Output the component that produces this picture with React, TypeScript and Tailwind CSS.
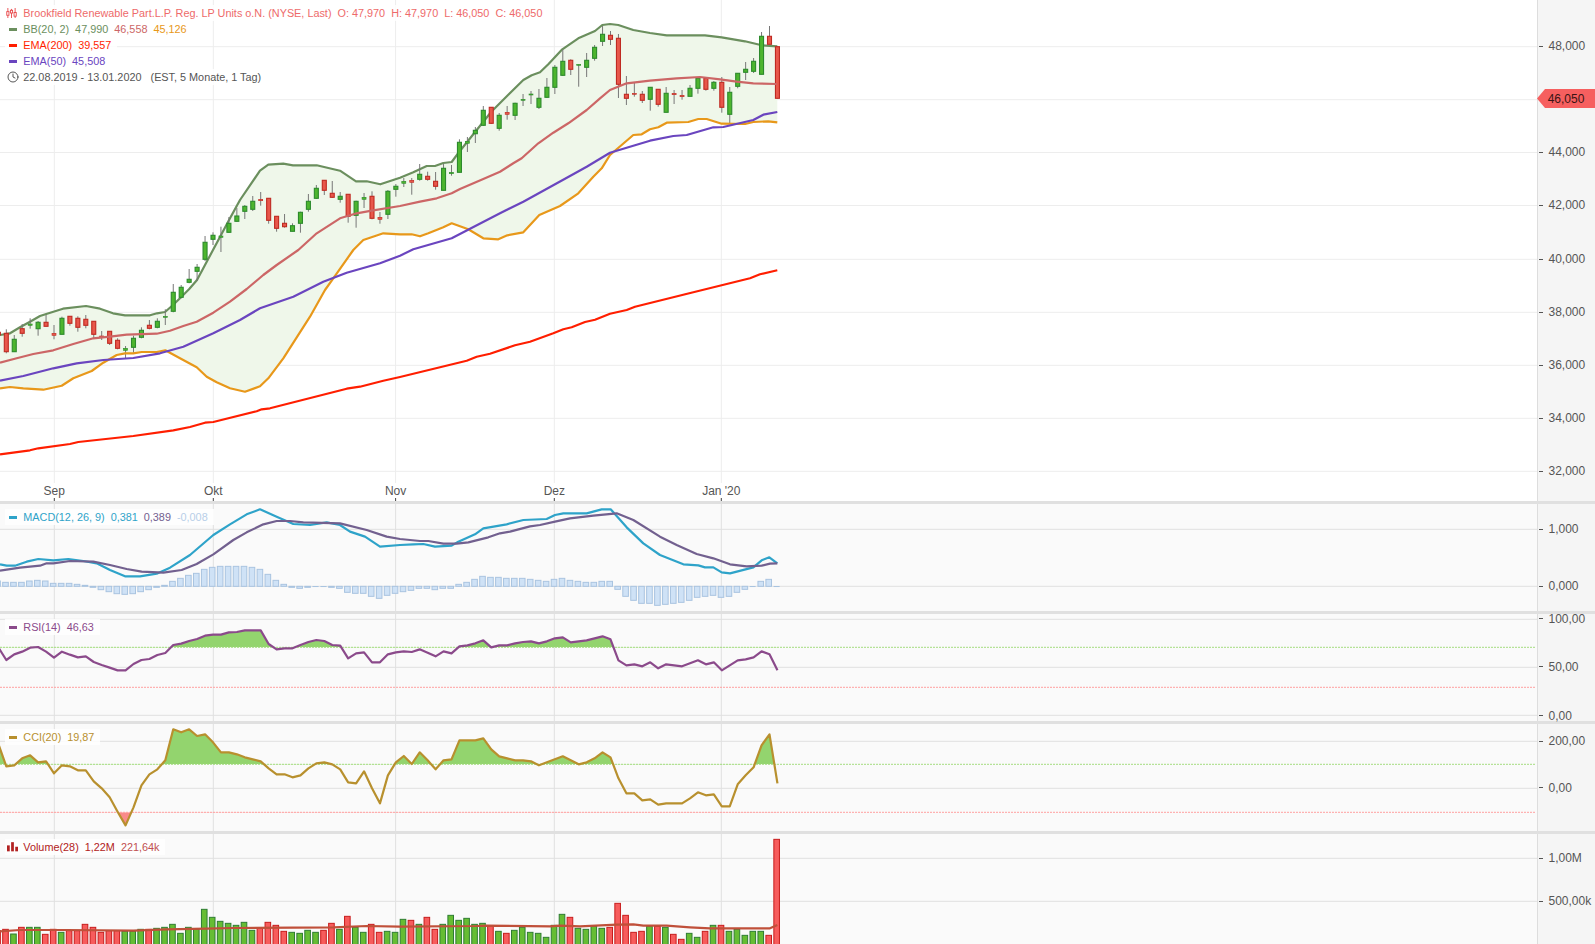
import React from 'react';
import { Clock } from 'lucide-react';

type Pt = [number, number];
type Candle = ['g' | 'r', number, number, number, number];

const PLOT_W = 1537;
const xAt = (k: number) => -1.65 + 7.95 * k;
const toPath = (pts: Pt[]) => pts.map(([x, y]) => `${x},${y}`).join(' ');
// crops were read at 3x, so series below are kept in crop units for the lower panels
const fromCrop = (base: number, v: number) => base + v / 3;

// top, bottom, high, low of each candle body, in page pixels
const candles: Candle[] = [
  ['r', 332.3, 335, 328, 340], ['r', 333.3, 351.7, 329.3, 353.3], ['g', 339.3, 351.7, 335, 351.7], ['r', 328.7, 333.3, 324, 336.7],
  ['g', 324, 325.3, 318.3, 328.7], ['g', 322.3, 328.7, 321, 335.7], ['r', 322.3, 326.3, 315, 326.3], ['r', 333.3, 335.3, 325, 339.3],
  ['g', 318.3, 334.3, 316.7, 334.3], ['r', 316.3, 323.3, 316.3, 325.7], ['r', 318.3, 327.3, 316.3, 331.7], ['r', 319.3, 325.3, 315, 328.3],
  ['r', 321.3, 334.3, 321.3, 338.3], ['r', 336, 337.3, 331, 340], ['r', 331.3, 343.3, 331.3, 345], ['r', 340.3, 348.3, 338.3, 349.3],
  ['g', 348.3, 350.3, 346, 358], ['g', 338.3, 347.3, 335.7, 352.7], ['g', 330.3, 337.3, 327.3, 338.3], ['r', 325.3, 328.3, 320, 329.3],
  ['g', 321.3, 327.3, 318.3, 328.3], ['g', 316.3, 317.3, 309.3, 325], ['g', 292.3, 311.3, 284, 312.3], ['g', 287.3, 297.3, 285, 298.3],
  ['g', 279.3, 282.3, 269, 283.3], ['g', 267.3, 271.3, 264, 281], ['g', 242.3, 259.3, 236, 261], ['g', 235.3, 239.3, 232.3, 245],
  ['g', 236, 237.3, 226.7, 252], ['g', 223.3, 232.3, 217, 233], ['g', 216, 221.3, 208, 222], ['g', 206.3, 211.3, 205, 219],
  ['g', 201.3, 209.3, 196, 211], ['r', 199.3, 200.7, 192, 205.7], ['r', 198.3, 220.3, 198.3, 223.7], ['r', 216.3, 228.3, 216.3, 231.7],
  ['r', 223.3, 226.7, 214, 227.7], ['g', 225.7, 231.3, 223.3, 231.3], ['g', 212.3, 223.3, 211.7, 232.7], ['g', 201.3, 209.3, 194, 211.7],
  ['g', 188.3, 198.3, 185, 199], ['r', 180.3, 190.3, 180.3, 195], ['r', 193.3, 197.3, 181, 198], ['g', 196.3, 199.3, 192, 202.7],
  ['r', 194.3, 216.3, 194.3, 222.7], ['g', 201.3, 215.3, 200.7, 227.7], ['g', 197.3, 199.3, 193, 208], ['r', 196.3, 218.3, 191.3, 219.3],
  ['r', 217.3, 219.3, 212, 223.7], ['g', 191.3, 214.3, 190, 219], ['g', 186.3, 189.3, 184, 196.7], ['g', 181.3, 183.3, 178, 187],
  ['r', 180.3, 182.3, 178, 194.7], ['g', 174.3, 179.3, 164, 180.7], ['r', 176.3, 179.3, 171.7, 180.7], ['r', 181.3, 186.3, 172, 189.7],
  ['g', 168.3, 190.3, 164, 190.3], ['g', 172.3, 173.7, 165, 175.7], ['g', 142.3, 172.3, 139.3, 172.3], ['g', 141.3, 143.3, 137, 152],
  ['g', 130.3, 133.7, 127, 143], ['g', 110.3, 125.3, 106, 126], ['r', 107.3, 123.3, 107.3, 124], ['g', 115.3, 128.3, 113, 130.7],
  ['r', 112.3, 114.3, 106, 119.7], ['g', 103.3, 115.3, 102.7, 120], ['g', 99.3, 100.3, 94, 106], ['g', 94, 95, 91, 104],
  ['g', 98.3, 107.3, 89, 109], ['g', 87.3, 97.3, 78, 98], ['g', 67.3, 87.3, 65, 94], ['g', 61.3, 75.3, 49.7, 76],
  ['r', 60.3, 69.3, 59.3, 75], ['g', 64.3, 65.3, 64.3, 86.7], ['g', 60.3, 67.3, 53, 77], ['g', 47.3, 58.3, 45, 60.7],
  ['g', 34.3, 41.3, 26, 46], ['r', 35.3, 39.3, 31, 45], ['r', 38.3, 84.3, 34, 98], ['r', 94.3, 98.3, 76, 105],
  ['r', 93.3, 94.3, 82, 96.7], ['r', 94.3, 100.3, 91, 103], ['g', 87.3, 99.3, 87, 110.7], ['r', 89.3, 104.3, 89.3, 106.7],
  ['g', 93.3, 112.3, 87, 112.3], ['r', 93.3, 94.7, 90, 104], ['r', 95.3, 96.7, 90, 99.7], ['g', 88.3, 96.3, 85, 96.3],
  ['g', 78.3, 88.3, 77, 93.7], ['r', 78.3, 89.3, 78.3, 90.7], ['g', 82.3, 88.3, 81, 90.7], ['r', 82.3, 107.3, 77, 112.7],
  ['g', 92.3, 114.3, 87, 123.7], ['g', 73.3, 86.3, 73.3, 88.3], ['g', 69.3, 72.3, 62, 80], ['g', 61.3, 71.3, 58, 73],
  ['g', 36.3, 74.3, 32, 74.3], ['r', 36.3, 44.3, 26, 44.3], ['r', 46.7, 98.3, 46.7, 98.3],
];

const bbUpper: Pt[] = [
  [0, 335], [10, 333.3], [20, 327.3], [30, 321.7], [40, 316], [47, 313.7], [63, 308.7], [86, 306], [100, 308.7], [113, 313.3], [125, 315.3], [150, 315.3],
  [157, 313.3], [165, 312], [173, 305], [181, 297.3], [189, 289.3], [197, 280], [205, 265], [213, 250], [230, 218.3], [240, 200], [260, 170.7], [268.3, 164.7],
  [283.3, 163.7], [293, 165.3], [316.7, 165.3], [340, 170.7], [356, 181.3], [366.7, 181.3], [380.3, 184.3], [400, 177.7], [413.3, 172.3], [426.7, 166], [435, 166],
  [443.3, 163], [451.7, 162], [459.3, 151.7], [475.3, 131.7], [491.3, 111.7], [507.3, 95.7], [523.3, 80], [531.7, 75.3], [540, 72.3], [548.3, 64.3], [562.3, 49.3],
  [578.3, 38.3], [595, 31], [602.3, 25], [610, 24], [618.3, 25], [633.3, 30], [650, 33], [666.7, 35.3], [705, 35.3], [721.7, 37.3], [745, 41.3], [761.7, 45.3], [777.3, 46.3],
];
const bbMid: Pt[] = [
  [0, 362.7], [16.7, 358.3], [33.3, 354], [53.3, 350.3], [73.3, 344], [93.3, 338.3], [110, 336.7], [126.7, 334.7], [156.7, 333.7], [170, 330.7], [183.3, 326], [196.7, 321.7],
  [213.3, 312.7], [230, 301.7], [246.7, 289], [263.3, 275], [276.7, 265], [298.3, 250], [316.7, 233.3], [340, 218.3], [356.7, 213.3], [371.7, 210.7], [400, 206], [420, 201.7],
  [436.7, 198.3], [451.7, 193.3], [460, 189], [483.3, 179], [500, 171.7], [513.3, 163.3], [521.7, 158.3], [538.3, 143.3], [553.3, 132.7], [568.3, 123.3], [586.7, 110], [600, 98.3],
  [610, 90], [626.7, 83.3], [650, 80.7], [676.7, 78.3], [700, 77], [720, 79.3], [736.7, 81.7], [753.3, 83.3], [776.7, 84],
];
const bbLower: Pt[] = [
  [0, 388.3], [10, 387], [23.3, 388.3], [43.3, 389.7], [61.7, 385.7], [73.3, 378.3], [91.7, 371], [103.3, 362.7], [116.7, 355], [125, 353.3], [133.3, 353.3], [141.7, 352],
  [156.7, 352], [165.3, 350.3], [180, 358.3], [196.7, 367.3], [206.7, 376.7], [216.7, 382.3], [230, 388.3], [245, 391.7], [260, 386.3], [268.3, 378.3], [283.3, 358.3], [310, 316.7],
  [325, 290], [333.3, 278.3], [353.3, 250], [363.3, 240], [383.3, 233.3], [400, 234.3], [411.7, 234.3], [420, 236.3], [428.3, 233.3], [443.3, 227.3], [451.7, 223.3], [468.3, 229.3],
  [483.3, 238.3], [498.3, 239.3], [507.3, 235.3], [523.3, 232.3], [539.3, 215], [560, 206], [578.3, 193.3], [593.3, 176.7], [601.7, 168.3], [610, 155], [633.3, 135], [641.7, 134.3],
  [650, 129.3], [658.3, 127.3], [666.7, 122.7], [688.3, 122], [698.3, 119], [706.7, 119], [721.7, 123.7], [745, 124], [753.3, 122], [768.3, 121.3], [777.3, 122.3],
];
const ema50: Pt[] = [
  [0, 380.7], [23.3, 376], [53.3, 368.3], [76.7, 363.3], [103.3, 360], [133.3, 358], [160, 353.3], [183.3, 346.7], [213.3, 333.3], [240, 320], [260, 308.3], [293.3, 296.7],
  [323.3, 281.7], [346.7, 272.7], [380, 263.3], [400, 255.7], [413.3, 249.3], [451.7, 238.3], [500, 213.3], [523.3, 201.7], [570, 176], [586.7, 166.7], [610, 152.7], [633.3, 145.7],
  [650, 140.7], [673.3, 136], [686.7, 135], [713.3, 127.3], [723.3, 127], [753.3, 120], [763.3, 114.7], [777.3, 112],
];
const ema200: Pt[] = [
  [0, 454.3], [30, 450.3], [38.3, 448.3], [70, 444], [78.3, 442], [133.3, 436], [173.3, 430.3], [190, 427], [205, 422.7], [213.3, 422], [256.7, 411.3], [261.7, 409.3], [270, 408.3],
  [346.7, 388.7], [360, 386.7], [383.3, 380.7], [400, 377], [466.7, 360.7], [476.7, 356.7], [490, 353.7], [515, 345.3], [530, 341.7], [553.3, 333.3], [563.3, 329.3], [571.7, 327.3],
  [585, 322], [595, 319.7], [610, 313.7], [626.7, 310], [635, 306.7], [693.3, 292.3], [750, 278.3], [760, 274.3], [777.3, 270.3],
];

const macdLine: Pt[] = [
  ...([[0, 208], [20, 212], [45, 212], [80, 200], [115, 192], [160, 196], [205, 192], [250, 198], [290, 205], [330, 225], [375, 244], [420, 244], [470, 236], [510, 218], [570, 180], [640, 120], [690, 88], [740, 58], [780, 43], [830, 65], [880, 87], [930, 90], [980, 82], [1020, 90], [1050, 110], [1095, 125], [1140, 155], [1200, 150]] as Pt[]).map(([a, b]): Pt => [a / 3, fromCrop(495, b)]),
  ...([[40, 148], [70, 147], [105, 155], [155, 152], [175, 140], [225, 118], [250, 100], [320, 88], [370, 75], [440, 72], [465, 60], [490, 55], [560, 55], [605, 43], [632, 43], [680, 97], [730, 145], [780, 180], [850, 208], [895, 211], [915, 217], [940, 217], [965, 232], [990, 235], [1060, 217], [1085, 196], [1108, 187], [1132, 205]] as Pt[]).map(([a, b]): Pt => [400 + a / 3, fromCrop(495, b)]),
];
const macdSignal: Pt[] = [
  ...([[0, 227], [60, 218], [120, 212], [140, 205], [160, 205], [210, 198], [280, 200], [330, 210], [380, 222], [425, 230], [490, 233], [545, 225], [590, 207], [640, 178], [700, 135], [740, 112], [790, 88], [830, 78], [870, 78], [910, 82], [1020, 85], [1100, 105], [1160, 125], [1200, 132]] as Pt[]).map(([a, b]): Pt => [a / 3, fromCrop(495, b)]),
  ...([[60, 138], [85, 138], [130, 146], [170, 146], [205, 142], [265, 127], [300, 115], [330, 110], [390, 94], [420, 90], [465, 80], [510, 70], [580, 62], [650, 55], [700, 75], [780, 125], [830, 150], [890, 177], [940, 190], [990, 208], [1040, 214], [1085, 212], [1110, 206], [1132, 205]] as Pt[]).map(([a, b]): Pt => [400 + a / 3, fromCrop(495, b)]),
];
const macdHist = [
  258, 262, 262, 262, 258, 256, 258, 265, 265, 265, 268, 271, 277, 284, 290, 296, 298, 296, 290, 284, 277, 271, 259, 250, 241, 235, 223, 217, 214, 214, 214, 214, 217, 223, 238, 256, 268, 277, 280, 277, 275, 275, 277, 280, 292, 295, 295, 304, 310, 301, 295,
  290, 286, 280, 280, 284, 280, 280, 268, 262, 253, 244, 247, 247, 250, 250, 250, 253, 256, 259, 253, 250, 256, 259, 262, 262, 259, 259, 283, 304, 316, 325, 325, 331, 328, 325, 322, 316, 307, 304, 301, 307, 304, 292, 283, 275, 259, 253, 275,
];
const rsi = [
  457, 495, 478, 470, 458, 456, 470, 488, 470, 479, 487, 484, 501, 510, 518, 526, 526, 507, 495, 492, 480, 474, 450, 446, 438, 432, 422, 419, 419, 412, 411, 406, 406, 406, 447, 463, 460, 460, 450, 441, 435, 438, 450, 452, 490, 475, 472, 502, 502, 478, 472,
  469, 471, 463, 473, 484, 469, 475, 454, 451, 445, 436, 457, 451, 451, 445, 441, 439, 445, 439, 430, 427, 442, 439, 436, 430, 424, 433, 496, 511, 508, 514, 502, 520, 508, 511, 514, 505, 496, 508, 502, 526, 511, 496, 493, 487, 469, 478, 526,
];
const cci = [
  72, 139, 136, 115, 106, 127, 124, 160, 136, 139, 151, 151, 184, 205, 232, 275, 316, 262, 196, 163, 148, 121, 28, 37, 28, 48, 43, 67, 97, 97, 103, 112, 118, 124, 145, 163, 163, 172, 166, 145, 130, 127, 133, 148, 187, 190, 154, 205, 250, 166, 127,
  108, 132, 97, 121, 148, 121, 118, 61, 61, 61, 55, 88, 109, 115, 121, 121, 124, 136, 127, 118, 109, 121, 133, 127, 115, 97, 112, 175, 220, 220, 241, 238, 254, 250, 250, 250, 235, 217, 226, 223, 259, 259, 193, 166, 142, 76, 43, 190,
];
const volumes = [
  632, 628, 642, 622, 622, 622, 643, 628, 637, 632, 632, 613, 622, 637, 632, 632, 634, 634, 628, 628, 625, 622, 613, 640, 622, 628, 568, 592, 604, 610, 616, 607, 631, 625, 607, 616, 634, 637, 640, 631, 637, 631, 610, 628, 589, 622, 637, 613, 637, 634, 637,
  598, 601, 613, 592, 628, 613, 586, 601, 595, 613, 610, 619, 634, 640, 631, 622, 637, 640, 652, 616, 583, 592, 625, 628, 619, 625, 622, 550, 586, 637, 634, 619, 619, 622, 643, 658, 640, 652, 634, 616, 616, 634, 628, 646, 634, 634, 646, 358,
];
const volumeAvg: Pt[] = [
  ...([[0, 634], [60, 630], [200, 630], [400, 632], [500, 628], [620, 626], [700, 624], [1000, 622], [1100, 618], [1200, 620]] as Pt[]).map(([a, b]): Pt => [a / 3, fromCrop(720, b)]),
  ...([[230, 618], [260, 617], [450, 619], [480, 617], [540, 619], [650, 614], [700, 613], [730, 617], [800, 617], [870, 622], [930, 625], [1040, 625], [1110, 625], [1132, 615]] as Pt[]).map(([a, b]): Pt => [400 + a / 3, fromCrop(720, b)]),
];

const months = [
  { label: 'Sep', x: 54.3 },
  { label: 'Okt', x: 213.3 },
  { label: 'Nov', x: 395.6 },
  { label: 'Dez', x: 554.3 },
  { label: "Jan '20", x: 721.3 },
];

function Grid({ rows, top, bottom, color }: { rows: number[]; top: number; bottom: number; color: string }) {
  return (
    <g stroke={color} strokeWidth="1">
      {rows.map((y) => (
        <line key={y} x1="0" x2={PLOT_W} y1={y} y2={y} />
      ))}
      {months.map((m) => (
        <line key={m.label} x1={m.x} x2={m.x} y1={top} y2={bottom} />
      ))}
    </g>
  );
}

function Dashed({ y, color }: { y: number; color: string }) {
  return <line x1="0" x2="1535" y1={y} y2={y} stroke={color} strokeWidth="1" strokeDasharray="2 1" />;
}

function Threshold({ id, pts, level, above, color, top, bottom }: { id: string; pts: Pt[]; level: number; above: boolean; color: string; top: number; bottom: number }) {
  const first = pts[0][0];
  const last = pts[pts.length - 1][0];
  return (
    <>
      <clipPath id={id}>
        <rect x="-5" width="800" y={above ? top : level} height={above ? level - top : bottom - level} />
      </clipPath>
      <polygon clipPath={`url(#${id})`} fill={color} points={`${first},${level} ${toPath(pts)} ${last},${level}`} />
    </>
  );
}

function Line({ pts, color, width = 2.2 }: { pts: Pt[]; color: string; width?: number }) {
  return <polyline points={toPath(pts)} fill="none" stroke={color} strokeWidth={width} strokeLinejoin="round" />;
}

function AxisLabels({ top, items }: { top: number; items: { y: number; text: string }[] }) {
  return (
    <>
      {items.map((t) => (
        <div key={t.text} className="absolute left-0 flex h-[14px] items-center whitespace-nowrap text-[12px] text-[#555]" style={{ top: t.y - top - 7 }}>
          <span className="ml-[1px] h-px w-[4px] bg-[#555]" />
          <span className="ml-[5.5px]">{t.text}</span>
        </div>
      ))}
    </>
  );
}

function LegendRow({ icon, values }: { icon: React.ReactNode; values: { text: string; color: string }[] }) {
  return (
    <div className="flex h-4 w-fit items-center bg-white/85 pr-[6px]">
      <span className="flex w-[18.3px] shrink-0 items-center justify-start">{icon}</span>
      <div className="flex gap-[6px] whitespace-pre">
        {values.map((v) => (
          <span key={v.text} style={{ color: v.color }}>
            {v.text}
          </span>
        ))}
      </div>
    </div>
  );
}

function Dash({ color }: { color: string }) {
  return <span className="ml-[4px] h-[3px] w-2" style={{ background: color }} />;
}

function Legend({ children }: { children: React.ReactNode }) {
  return <div className="absolute left-[5px] top-[5px] flex flex-col text-[10.85px] leading-4">{children}</div>;
}

function CandleIcon() {
  return (
    <svg width="11" height="10" viewBox="0 0 12 11" className="ml-[1px]" fill="none" stroke="#e8484a" strokeWidth="1">
      <path d="M2 0v11M6 1v10M10 0v11" />
      <rect x="0.8" y="4" width="2.4" height="4" fill="#fff" />
      <rect x="4.8" y="2.5" width="2.4" height="3" fill="#fff" />
      <rect x="8.8" y="5" width="2.4" height="4" fill="#fff" />
    </svg>
  );
}

function VolumeIcon() {
  return (
    <svg width="11" height="9.5" viewBox="0 0 12 10" className="ml-[2px]" fill="#b22222">
      <rect x="0" y="3.5" width="3" height="6.5" />
      <rect x="4.5" y="0" width="3" height="10" />
      <rect x="9" y="5" width="3" height="5" />
    </svg>
  );
}

function Separator() {
  return <div className="h-[3px] w-full shrink-0 bg-[#e0e0e0]" />;
}

function Axis({ children }: { children?: React.ReactNode }) {
  return <div className="relative w-[58px] shrink-0 border-l border-[#ddd] bg-[#f5f5f5]">{children}</div>;
}

function MainPanel() {
  const rows = [46.7, 99.7, 152.5, 205.5, 259.3, 312.3, 365.3, 418.3, 471.3];
  const prices = [
    { y: 46, text: '48,000' },
    { y: 152, text: '44,000' },
    { y: 205, text: '42,000' },
    { y: 259, text: '40,000' },
    { y: 312, text: '38,000' },
    { y: 365, text: '36,000' },
    { y: 418, text: '34,000' },
    { y: 471, text: '32,000' },
  ];
  return (
    <div className="flex h-[501px] shrink-0 bg-white">
      <div className="relative w-[1537px] shrink-0">
        <svg viewBox="0 0 1537 501" className="block h-full w-full">
          <Grid rows={rows} top={0} bottom={483} color="#ededed" />
          {months.map((m) => (
            <line key={m.label} x1={m.x} x2={m.x} y1="498" y2="501" stroke="#444" />
          ))}
          <polygon fill="#eff7ea" points={`${toPath(bbUpper)} ${toPath([...bbLower].reverse())}`} />
          <Line pts={bbUpper} color="#6b8f5e" />
          {candles.map(([c, top, bot, hi, lo], k) => {
            const x = xAt(k);
            const thin = bot - top < 2.5;
            return (
              <g key={k}>
                <line x1={x} x2={x} y1={hi} y2={lo} stroke="#777" strokeWidth="1" />
                <rect
                  x={x - 2}
                  y={top}
                  width="4"
                  height={bot - top}
                  fill={c === 'g' ? '#4db52e' : '#e8574b'}
                  stroke={c === 'g' ? '#2c8a2c' : '#bf2a22'}
                  strokeWidth={thin ? 0.6 : 1.1}
                />
              </g>
            );
          })}
          <Line pts={bbMid} color="#cc6666" />
          <Line pts={bbLower} color="#e8981a" />
          <Line pts={ema50} color="#6a45bf" />
          <Line pts={ema200} color="#ff1e00" />
        </svg>
        {months.map((m) => (
          <span key={m.label} className="absolute top-[484px] -translate-x-1/2 whitespace-nowrap text-[12px] leading-[14px] text-[#555]" style={{ left: m.x }}>
            {m.label}
          </span>
        ))}
        <Legend>
          <LegendRow
            icon={<CandleIcon />}
            values={[
              { text: 'Brookfield Renewable Part.L.P. Reg. LP Units o.N. (NYSE, Last)', color: '#ee6a6a' },
              { text: 'O: 47,970', color: '#ee6a6a' },
              { text: 'H: 47,970', color: '#ee6a6a' },
              { text: 'L: 46,050', color: '#ee6a6a' },
              { text: 'C: 46,050', color: '#ee6a6a' },
            ]}
          />
          <LegendRow
            icon={<Dash color="#6b8f5e" />}
            values={[
              { text: 'BB(20, 2)', color: '#6b8f5e' },
              { text: '47,990', color: '#6b8f5e' },
              { text: '46,558', color: '#cc6666' },
              { text: '45,126', color: '#e8981a' },
            ]}
          />
          <LegendRow
            icon={<Dash color="#ff1e00" />}
            values={[
              { text: 'EMA(200)', color: '#ff1e00' },
              { text: '39,557', color: '#ff1e00' },
            ]}
          />
          <LegendRow
            icon={<Dash color="#6a45bf" />}
            values={[
              { text: 'EMA(50)', color: '#6a45bf' },
              { text: '45,508', color: '#6a45bf' },
            ]}
          />
          <LegendRow
            icon={<Clock size={12} strokeWidth={1.8} className="ml-[1.5px] text-[#444]" />}
            values={[{ text: '22.08.2019 - 13.01.2020   (EST, 5 Monate, 1 Tag)', color: '#555' }]}
          />
        </Legend>
      </div>
      <Axis>
        <AxisLabels top={0} items={prices} />
        <div className="absolute -left-px top-[89px] flex h-[19px] w-[58px] items-center bg-[#f65f5f] pl-[10.7px] text-[12px] text-[#3a1414] [clip-path:polygon(0_50%,8px_0,100%_0,100%_100%,8px_100%)]">
          46,050
        </div>
      </Axis>
    </div>
  );
}

function MacdPanel() {
  const zero = fromCrop(495, 274);
  return (
    <div className="flex h-[107px] shrink-0 bg-[#fafafa]">
      <div className="relative w-[1537px] shrink-0">
        <svg viewBox="0 504 1537 107" className="block h-full w-full">
          <Grid rows={[529.3, 586.3]} top={504} bottom={611} color="#e0e0e0" />
          {macdHist.map((v, k) => {
            const y = fromCrop(495, v);
            const thin = Math.abs(y - zero) < 1;
            return (
              <rect
                key={k}
                x={xAt(k) - 3.6}
                y={Math.min(y, zero)}
                width="5.6"
                height={Math.max(Math.abs(y - zero), 0.4)}
                fill="#cfe2f6"
                stroke="#a9c4e0"
                strokeWidth={thin ? 0.6 : 1}
              />
            );
          })}
          <Line pts={macdLine} color="#2ea3c9" />
          <Line pts={macdSignal} color="#72608f" />
        </svg>
        <Legend>
          <LegendRow
            icon={<Dash color="#2ea3c9" />}
            values={[
              { text: 'MACD(12, 26, 9)', color: '#2ea3c9' },
              { text: '0,381', color: '#2ea3c9' },
              { text: '0,389', color: '#72608f' },
              { text: '-0,008', color: '#b8cfe8' },
            ]}
          />
        </Legend>
      </div>
      <Axis>
        <AxisLabels
          top={504}
          items={[
            { y: 529, text: '1,000' },
            { y: 586, text: '0,000' },
          ]}
        />
      </Axis>
    </div>
  );
}

function RsiPanel() {
  const pts = rsi.map((v, k): Pt => [xAt(k), fromCrop(495, v)]);
  return (
    <div className="flex h-[107px] shrink-0 bg-[#fafafa]">
      <div className="relative w-[1537px] shrink-0">
        <svg viewBox="0 614 1537 107" className="block h-full w-full">
          <Grid rows={[619.3, 667.3, 715.3]} top={614} bottom={721} color="#e0e0e0" />
          <Threshold id="rsi-high" pts={pts} level={647.3} above color="#93d46e" top={614} bottom={721} />
          <Dashed y={647.3} color="#a6dd80" />
          <Dashed y={687.3} color="#ffa0a0" />
          <Line pts={pts} color="#8b4a8b" />
        </svg>
        <Legend>
          <LegendRow
            icon={<Dash color="#8b4a8b" />}
            values={[
              { text: 'RSI(14)', color: '#8b4a8b' },
              { text: '46,63', color: '#8b4a8b' },
            ]}
          />
        </Legend>
      </div>
      <Axis>
        <AxisLabels
          top={614}
          items={[
            { y: 618.5, text: '100,00' },
            { y: 666.5, text: '50,00' },
            { y: 715.5, text: '0,00' },
          ]}
        />
      </Axis>
    </div>
  );
}

function CciPanel() {
  const pts = cci.map((v, k): Pt => [xAt(k), fromCrop(720, v)]);
  return (
    <div className="flex h-[107px] shrink-0 bg-[#fafafa]">
      <div className="relative w-[1537px] shrink-0">
        <svg viewBox="0 724 1537 107" className="block h-full w-full">
          <Grid rows={[741.3, 788.3]} top={724} bottom={831} color="#e0e0e0" />
          <Threshold id="cci-high" pts={pts} level={764.3} above color="#93d46e" top={724} bottom={831} />
          <Threshold id="cci-low" pts={pts} level={812.3} above={false} color="#f98a8a" top={724} bottom={831} />
          <Dashed y={764.3} color="#a6dd80" />
          <Dashed y={812.3} color="#ffa0a0" />
          <Line pts={pts} color="#b8902e" />
        </svg>
        <Legend>
          <LegendRow
            icon={<Dash color="#b8902e" />}
            values={[
              { text: 'CCI(20)', color: '#b8902e' },
              { text: '19,87', color: '#b8902e' },
            ]}
          />
        </Legend>
      </div>
      <Axis>
        <AxisLabels
          top={724}
          items={[
            { y: 741, text: '200,00' },
            { y: 787.5, text: '0,00' },
          ]}
        />
      </Axis>
    </div>
  );
}

function VolumePanel() {
  return (
    <div className="flex h-[110px] shrink-0 bg-[#fafafa]">
      <div className="relative w-[1537px] shrink-0">
        <svg viewBox="0 834 1537 110" className="block h-full w-full">
          <Grid rows={[858.3, 901.3]} top={834} bottom={944} color="#e0e0e0" />
          {volumes.map((v, k) => {
            const up = candles[k][0] === 'g';
            const y = fromCrop(720, v);
            return (
              <rect
                key={k}
                x={xAt(k) - 3.6}
                y={y}
                width="5.6"
                height={960 - y}
                fill={up ? '#66bd33' : '#f75c5c'}
                stroke={up ? '#2e7d32' : '#c71c1c'}
                strokeWidth="1"
              />
            );
          })}
          <Line pts={volumeAvg} color="#c0503a" />
        </svg>
        <Legend>
          <LegendRow
            icon={<VolumeIcon />}
            values={[
              { text: 'Volume(28)', color: '#b22222' },
              { text: '1,22M', color: '#b22222' },
              { text: '221,64k', color: '#c05050' },
            ]}
          />
        </Legend>
      </div>
      <Axis>
        <AxisLabels
          top={834}
          items={[
            { y: 858, text: '1,00M' },
            { y: 901, text: '500,00k' },
          ]}
        />
      </Axis>
    </div>
  );
}

export default function App() {
  return (
    <div className="flex h-[944px] w-[1595px] flex-col overflow-hidden bg-white font-['Liberation_Sans',Arial,sans-serif]">
      <MainPanel />
      <Separator />
      <MacdPanel />
      <Separator />
      <RsiPanel />
      <Separator />
      <CciPanel />
      <Separator />
      <VolumePanel />
    </div>
  );
}
